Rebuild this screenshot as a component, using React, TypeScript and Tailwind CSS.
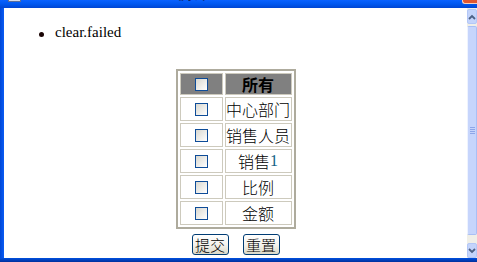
import type { ReactNode } from 'react'

const cjk = "font-['Noto_Sans_CJK_SC','Noto_Sans',sans-serif]"

function Check() {
  return (
    <span className="block h-[13px] w-[13px] border border-[#0e4c98] bg-linear-to-br from-[#d9d8d0] to-white" />
  )
}

function Row({ label, head }: { label: ReactNode; head?: boolean }) {
  const cell = head ? 'border border-[#cdcabd] bg-[#808080] p-0' : 'border border-[#cdcabd] bg-white p-0'
  const h = head ? 'h-[20px]' : 'h-[22px]'
  return (
    <tr>
      <td className={cell}>
        <div className={`flex w-[41px] ${h} items-center justify-center`}>
          <Check />
        </div>
      </td>
      <td className={cell}>
        <div
          className={`flex w-[65px] ${h} items-center justify-center whitespace-nowrap text-[16px] leading-none text-black ${cjk} ${head ? 'font-bold' : 'font-light'}`}
        >
          {label}
        </div>
      </td>
    </tr>
  )
}

function XpButton({ children }: { children: ReactNode }) {
  return (
    <button
      className={`flex h-[21px] w-[37px] items-center justify-center rounded-[3px] border border-[#003c74] bg-linear-to-b from-white via-[#f4f3ee] to-[#dcd9c8] p-0 text-[15px] font-light leading-none text-black ${cjk}`}
    >
      {children}
    </button>
  )
}

function Arrow({ up }: { up?: boolean }) {
  return (
    <svg width="8" height="6" viewBox="0 0 8 6">
      <path
        d={up ? 'M1 5 L4 2 L7 5' : 'M1 1 L4 4 L7 1'}
        fill="none"
        stroke="#4d6185"
        strokeWidth="1.8"
      />
    </svg>
  )
}

function Scrollbar() {
  return (
    <div className="flex w-[10px] flex-col bg-[#f0efe8] pt-[1px]">
      <div className="flex h-[15px] items-center justify-center rounded-[2px] border border-[#b3c7f7] bg-[#c4d4fb]">
        <Arrow up />
      </div>
      <div className="mt-[2px] flex h-[209px] flex-col items-center justify-center gap-[1px] rounded-[2px] border border-[#a9bff5] border-l-[#eef3ff] bg-[#c6d5fc]">
        <span className="block h-px w-[5px] bg-[#8ea6e8]" />
        <span className="block h-px w-[5px] bg-[#8ea6e8]" />
        <span className="block h-px w-[5px] bg-[#8ea6e8]" />
        <span className="block h-px w-[5px] bg-[#8ea6e8]" />
      </div>
      <div className="flex-1" />
      <div className="flex h-[15px] items-center justify-center rounded-[2px] border border-[#b3c7f7] bg-[#c4d4fb]">
        <Arrow />
      </div>
    </div>
  )
}

export default function App() {
  return (
    <div className="flex h-[262px] w-[477px] flex-col overflow-hidden bg-[#0054e3]">
      {/* title bar, only its lower edge is in view */}
      <div className="relative h-[8px] overflow-hidden bg-linear-to-b from-[#0a62ff] via-[#0058f0] to-[#0045d2]">
        <span className="absolute left-[8px] top-0 h-[2px] w-[13px] border-x border-b border-[#5a6e9a] bg-[#d8dce8]" />
        <span className="absolute left-[140px] top-[-13px] font-['Liberation_Sans',sans-serif] text-[13px] font-bold leading-[15px] text-[#0a1f66]">
          HTML 测试
        </span>
        <span className="absolute left-[462px] top-0 h-[4px] w-[16px] rounded-bl-[3px] border-b border-l border-[#f4d0c0] bg-[#e2572f]" />
      </div>

      <div className="flex h-[250px]">
        <div className="w-[4px] bg-linear-to-r from-[#0047d6] to-[#0a5cf5]" />
        <div className="flex flex-1 flex-col items-center bg-white">
          <ul className="mt-[16px] w-full pl-[35px]">
            <li className="flex font-['Liberation_Serif',serif] text-[15px] leading-[17px] text-black">
              <span className="mr-[11px] mt-[8px] block h-[5px] w-[5px] rounded-full bg-[#1a0505]" />
              clear.failed
            </li>
          </ul>

          <table className="mt-[28px] border-separate border-spacing-[2px] border-2 border-[#aeab9d]">
            <tbody>
              <Row head label="所有" />
              <Row label="中心部门" />
              <Row label="销售人员" />
              <Row
                label={
                  <>
                    销售
                    <span className="font-['Liberation_Serif',serif] font-normal text-[#135f86]">1</span>
                  </>
                }
              />
              <Row label="比例" />
              <Row label="金额" />
            </tbody>
          </table>

          <div className="mt-[5px] flex gap-[14px]">
            <XpButton>提交</XpButton>
            <XpButton>重置</XpButton>
          </div>
        </div>
        <Scrollbar />
      </div>

      <div className="h-[4px] bg-linear-to-b from-[#0050e0] to-[#00309c]" />
    </div>
  )
}
